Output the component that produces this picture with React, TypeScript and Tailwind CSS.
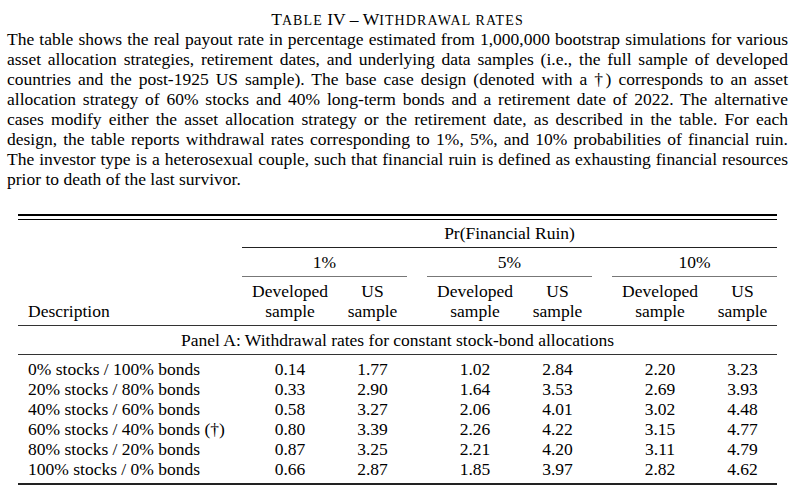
const LINES = [
  "The table shows the real payout rate in percentage estimated from 1,000,000 bootstrap simulations for various",
  "asset allocation strategies, retirement dates, and underlying data samples (i.e., the full sample of developed",
  "countries and the post-1925 US sample). The base case design (denoted with a \u2020) corresponds to an asset",
  "allocation strategy of 60% stocks and 40% long-term bonds and a retirement date of 2022. The alternative",
  "cases modify either the asset allocation strategy or the retirement date, as described in the table. For each",
  "design, the table reports withdrawal rates corresponding to 1%, 5%, and 10% probabilities of financial ruin.",
  "The investor type is a heterosexual couple, such that financial ruin is defined as exhausting financial resources",
];

const ROWS = [
  { desc: "0% stocks / 100% bonds", vals: ["0.14", "1.77", "1.02", "2.84", "2.20", "3.23"] },
  { desc: "20% stocks / 80% bonds", vals: ["0.33", "2.90", "1.64", "3.53", "2.69", "3.93"] },
  { desc: "40% stocks / 60% bonds", vals: ["0.58", "3.27", "2.06", "4.01", "3.02", "4.48"] },
  { desc: "60% stocks / 40% bonds (\u2020)", vals: ["0.80", "3.39", "2.26", "4.22", "3.15", "4.77"] },
  { desc: "80% stocks / 20% bonds", vals: ["0.87", "3.25", "2.21", "4.20", "3.11", "4.79"] },
  { desc: "100% stocks / 0% bonds", vals: ["0.66", "2.87", "1.85", "3.97", "2.82", "4.62"] },
];

const GROUPS = ["1%", "5%", "10%"];
const GROUP_START = ["col-start-2", "col-start-5", "col-start-8"];

// title in small caps, set by hand: [text, isBig]
const TITLE: [string, boolean][] = [
  ["T", true],
  ["ABLE", false],
  [" IV \u2013 W", true],
  ["ITHDRAWAL RATES", false],
];

export default function App() {
  return (
    <div className="w-[795px] h-[488px] bg-white text-black overflow-hidden font-['Liberation_Serif','Times_New_Roman',serif]">
      <div className="pt-[10px]">
        <div className="h-[19px] flex items-baseline justify-center leading-[19px] whitespace-pre">
          {TITLE.map(([t, big], i) => (
            <span key={i} className={big ? "text-[17.5px]" : "text-[14px] tracking-[0.08em]"}>
              {t}
            </span>
          ))}
        </div>
      </div>

      <div className="px-[7px] text-[17.5px] leading-[20px]">
        {LINES.map((l, i) => (
          <div key={i} className="text-justify [text-align-last:justify] whitespace-nowrap">
            {l}
          </div>
        ))}
        <div>prior to death of the last survivor.</div>
      </div>

      <div className="mx-[18px] mt-[25px] grid grid-cols-[224px_96px_69px_20px_96px_69px_20px_96px_69px] text-[17.5px] leading-[20px]">
        <div className="col-span-9 h-[2px] bg-black" />
        <div className="col-span-9 mt-[3px] h-px bg-black" />

        <div className="col-start-2 col-span-8 pt-[3px] pb-[4px] text-center">Pr(Financial Ruin)</div>
        <div className="col-start-2 col-span-8 h-px bg-[#222]" />

        {GROUPS.map((g, i) => (
          <div key={g} className={`col-span-2 pt-[4px] pb-[4px] text-center ${GROUP_START[i]}`}>
            {g}
          </div>
        ))}
        {GROUPS.map((g, i) => (
          <div key={g} className={`col-span-2 h-px bg-[#777] ${GROUP_START[i]}`} />
        ))}

        <div className="col-start-1 self-end pl-[10px] pb-[4px]">Description</div>
        {GROUPS.map((g, i) => (
          <div key={g} className={`col-span-2 grid grid-cols-[96px_69px] pt-[4px] pb-[4px] text-center ${GROUP_START[i]}`}>
            <div>
              Developed
              <br />
              sample
            </div>
            <div>
              US
              <br />
              sample
            </div>
          </div>
        ))}
        <div className="col-span-9 h-px bg-[#333]" />

        <div className="col-span-9 pt-[4px] pb-[4px] text-center">Panel A: Withdrawal rates for constant stock-bond allocations</div>
        <div className="col-span-9 h-px bg-[#333]" />
        <div className="col-span-9 h-[4px]" />

        {ROWS.map((r) => (
          <div key={r.desc} className="col-span-9 grid grid-cols-[224px_96px_69px_20px_96px_69px_20px_96px_69px]">
            <div className="pl-[10px] whitespace-nowrap">{r.desc}</div>
            <div className="text-center">{r.vals[0]}</div>
            <div className="text-center">{r.vals[1]}</div>
            <div />
            <div className="text-center">{r.vals[2]}</div>
            <div className="text-center">{r.vals[3]}</div>
            <div />
            <div className="text-center">{r.vals[4]}</div>
            <div className="text-center">{r.vals[5]}</div>
          </div>
        ))}
        <div className="col-span-9 h-[4px]" />
        <div className="col-span-9 h-[1.5px] bg-[#222]" />
      </div>
    </div>
  );
}
